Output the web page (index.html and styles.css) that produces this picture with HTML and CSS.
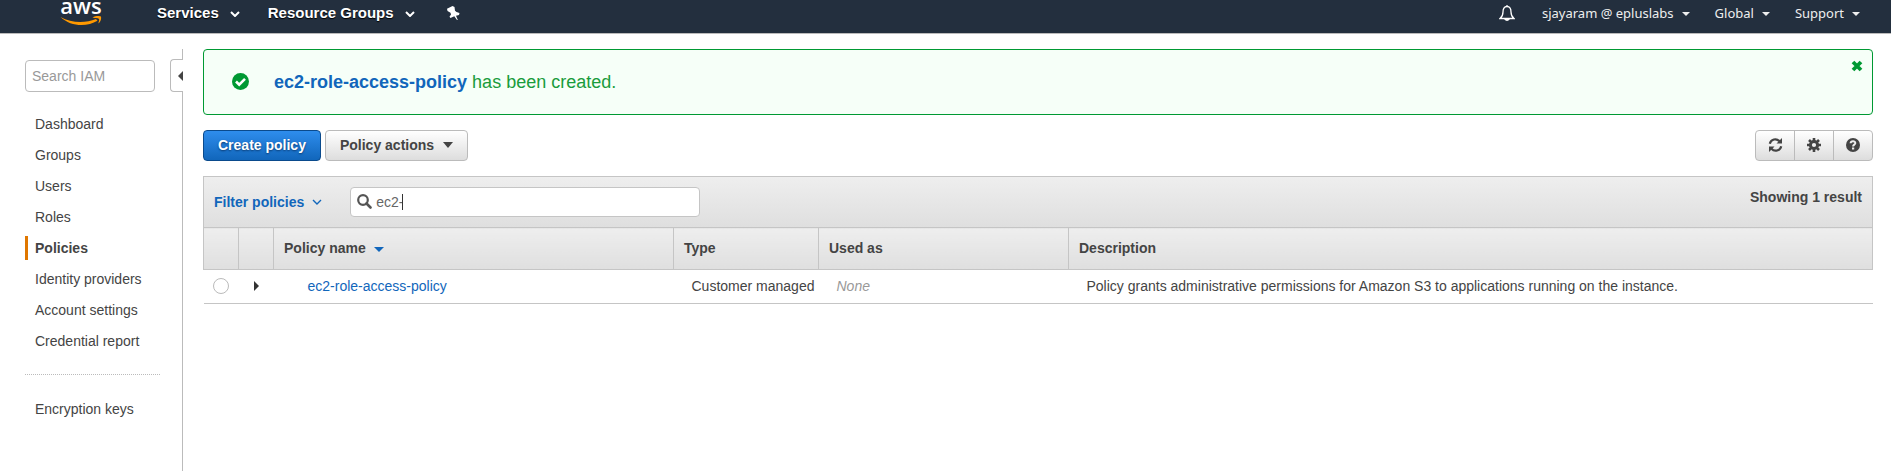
FILE: index.html
```html
<!DOCTYPE html>
<html lang="en">
<head>
<meta charset="utf-8">
<title>IAM Management Console</title>
<link rel="stylesheet" href="styles.css">
</head>
<body>
<header class="topbar">
  <nav class="topnav" aria-label="Services">
    <a class="logo" href="#" aria-label="AWS home">
      <span class="logo-word">aws</span>
      <svg class="logo-smile" width="42" height="10" viewBox="0 0 42 10" aria-hidden="true"><path d="M0.500 1C11 7 25 7.500 36 3L37.500 4.800C27 11 11 11 0.500 1Z" fill="#f90"/><path d="M32.500 1.500C36 -.4 40 -.1 41 .7C41.500 3 40.500 6 38.300 7.600C38.800 5.500 39.700 3.500 38.800 2.700C38 2 35 2.300 32.500 1.500Z" fill="#f90"/></svg>
    </a>
    <a class="toplink" href="#">Services <svg class="chev" width="10" height="6" viewBox="0 0 10 6"><path d="M1 1l4 4 4-4" fill="none" stroke="#fff" stroke-width="2"/></svg></a>
    <a class="toplink" href="#">Resource Groups <svg class="chev" width="10" height="6" viewBox="0 0 10 6"><path d="M1 1l4 4 4-4" fill="none" stroke="#fff" stroke-width="2"/></svg></a>
    <a class="pin" href="#" aria-label="Edit shortcuts"><svg width="13" height="14" viewBox="0 0 13 14"><path d="M5.500 0L7.500 1 8 4.800 9.500 6 12.500 7 12 9 9 9.700 10.800 14 10 14 7.300 10.300 3.500 12 2.500 10.800 4 8.500 3.500 6.800 0.500 5 0 2.800 2.500 1.500Z" fill="#fff"/></svg></a>
  </nav>
  <nav class="account" aria-label="Account">
    <a class="bell" href="#" aria-label="Notifications"><svg width="16" height="18" viewBox="0 0 16 18"><path d="M8 1v1.500M8 2.500C5 2.500 4 5 4 8c0 3.500-1 5-3 6.500h14c-2-1.500-3-3-3-6.500 0-3-1-5.500-4-5.500z" fill="none" stroke="#fff" stroke-width="1.300"/><path d="M5 15h6Q8 19 5 15z" fill="#fff"/></svg></a>
    <a href="#">sjayaram @ epluslabs <span class="caret"></span></a>
    <a href="#">Global <span class="caret"></span></a>
    <a href="#">Support <span class="caret"></span></a>
  </nav>
</header>
<div class="page">
  <aside class="sidebar">
    <input class="side-search" type="text" placeholder="Search IAM" aria-label="Search IAM">
    <button class="collapse" type="button" aria-label="Collapse navigation"><span></span></button>
    <nav class="side-nav" aria-label="IAM">
      <a href="#">Dashboard</a>
      <a href="#">Groups</a>
      <a href="#">Users</a>
      <a href="#">Roles</a>
      <a class="current" href="#" aria-current="page">Policies</a>
      <a href="#">Identity providers</a>
      <a href="#">Account settings</a>
      <a href="#">Credential report</a>
      <hr>
      <a href="#">Encryption keys</a>
    </nav>
  </aside>
  <main class="content">
    <div class="alert" role="status">
      <svg class="alert-icon" width="17" height="17" viewBox="0 0 17 17" aria-hidden="true"><circle cx="8.500" cy="8.500" r="8.500" fill="#093"/><path d="M4 8.500l3.200 3.200 5.800-5.800" fill="none" stroke="#fff" stroke-width="2.600"/></svg>
      <p><a href="#">ec2-role-access-policy</a> has been created.</p>
      <button class="close" type="button" aria-label="Dismiss"><svg width="12" height="12" viewBox="0 0 12 12"><path d="M2 2l8 8M10 2l-8 8" stroke="#093" stroke-width="3.800"/></svg></button>
    </div>
    <div class="toolbar">
      <button class="btn primary" type="button">Create policy</button>
      <button class="btn" type="button">Policy actions <span class="down"></span></button>
      <div class="group">
        <button class="btn" type="button" aria-label="Refresh"><svg width="15" height="14" viewBox="0 0 15 14"><path d="M1.800 5.800A5.600 5.600 0 0 1 11.500 3.300M13.200 8.200A5.600 5.600 0 0 1 3.500 10.700" fill="none" stroke="#444" stroke-width="2.200"/><path d="M14 0v5.500H8.500zM1 14V8.500h5.500z" fill="#444"/></svg></button>
        <button class="btn" type="button" aria-label="Settings"><svg width="14" height="14" viewBox="0 0 14 14"><circle cx="7" cy="7" r="3.600" fill="none" stroke="#444" stroke-width="3"/><path d="M7 0v3M7 11v3M0 7h3M11 7h3M2 2l2.200 2.200M9.800 9.800L12 12M12 2L9.800 4.200M4.200 9.800L2 12" stroke="#444" stroke-width="2.600"/></svg></button>
        <button class="btn" type="button" aria-label="Help"><svg width="14" height="14" viewBox="0 0 14 14"><circle cx="7" cy="7" r="7" fill="#444"/><path d="M4.600 5.300C4.800 2.400 9.400 2.600 9.300 5.200 9.200 6.700 7.100 6.600 7.100 8.500" fill="none" stroke="#eee" stroke-width="2"/><path d="M6 9.500h2.200v2H6z" fill="#eee"/></svg></button>
      </div>
    </div>
    <div class="filterbar">
      <button class="filter" type="button">Filter policies <svg width="10" height="6" viewBox="0 0 10 6"><path d="M1 1l4 4 4-4" fill="none" stroke="#1166bb" stroke-width="1.400"/></svg></button>
      <label class="search">
        <svg width="15" height="15" viewBox="0 0 15 15" aria-hidden="true"><circle cx="6" cy="6" r="4.800" fill="none" stroke="#555" stroke-width="2.200"/><path d="M9.500 9.500l4 4" stroke="#555" stroke-width="2.600" stroke-linecap="round"/></svg>
        <input type="text" value="ec2-" aria-label="Search policies"><span class="cursor"></span>
      </label>
      <span class="count">Showing 1 result</span>
    </div>
    <table class="policies">
      <colgroup><col class="c-pick"><col class="c-pick"><col class="c-name"><col class="c-type"><col class="c-used"><col></colgroup>
      <thead><tr><th></th><th></th><th>Policy name <span class="down sort"></span></th><th>Type</th><th>Used as</th><th>Description</th></tr></thead>
      <tbody><tr>
        <td class="pick"><input type="radio" name="policy" aria-label="Select ec2-role-access-policy"></td>
        <td class="pick"><button class="expand" type="button" aria-label="Expand"><span></span></button></td>
        <td class="name"><a href="#">ec2-role-access-policy</a></td>
        <td>Customer managed</td>
        <td class="none">None</td>
        <td>Policy grants administrative permissions for Amazon S3 to applications running on the instance.</td>
      </tr></tbody>
    </table>
  </main>
</div>
</body>
</html>
```
FILE: styles.css
```css
* { box-sizing: border-box; }
body {
  margin: 0;
  min-height: 100vh;
  display: flex;
  flex-direction: column;
  font: 14px/18px "Liberation Sans", Arial, sans-serif;
  color: #444;
  background: #fff;
}
a { color: #1166bb; text-decoration: none; }
button, input { font: inherit; color: inherit; margin: 0; }
button { cursor: pointer; padding: 0; }
svg { display: block; flex: none; }

.topbar {
  display: flex;
  justify-content: space-between;
  height: 34px;
  background: #232f3e;
  border-bottom: 1px solid #bbb;
}
.topbar a { color: #fff; display: flex; align-items: center; }
.topnav, .account { display: flex; height: 26px; }
.topnav { padding-left: 60px; }
.topnav .logo { flex-direction: column; justify-content: flex-end; width: 42px; margin-right: 55px; }
.logo-word { font: 600 22px/16px "Open Sans", "Noto Sans", sans-serif; margin-bottom: 3px; }
.toplink { font-size: 15px; font-weight: bold; gap: 11px; margin-right: 28px; text-shadow: 0 1px 1px #000; }
.toplink .chev { margin-top: 2px; }
.pin { margin-left: 4px; }
.account { font: 13px/18px "Noto Sans", "Open Sans", sans-serif; padding-right: 31px; gap: 25px; }
.account a { gap: 8px; color: #eee; }
.account .bell { margin-right: 2px; }
.caret { border: 4px solid transparent; border-top-color: #eee; border-bottom: 0; margin-top: 2px; }

.page { flex: 1; display: flex; padding: 15px 18px 0 0; }
.sidebar { position: relative; flex: none; width: 183px; padding: 11px 22px 0 25px; border-right: 1px solid #bbb; }
.side-search { width: 130px; height: 32px; padding: 0 6px; border: 1px solid #bbb; border-radius: 4px; }
.side-search::placeholder { color: #999; opacity: 1; }
.collapse {
  position: absolute;
  top: 10px;
  right: -1px;
  width: 13px;
  height: 33px;
  display: flex;
  align-items: center;
  justify-content: flex-end;
  border: 1px solid #bbb;
  border-right: 0;
  border-radius: 4px 0 0 4px;
  background: #fff;
}
.collapse span { border: 5px solid transparent; border-right-color: #444; border-left: 0; }
.side-nav { display: flex; flex-direction: column; gap: 7px; margin-top: 20px; }
.side-nav a { color: #444; line-height: 24px; padding-left: 7px; border-left: 3px solid transparent; white-space: nowrap; }
.side-nav .current { font-weight: bold; border-color: #e07700; }
.side-nav hr { width: 135px; margin: 14px 0 15px; border: 0; border-top: 1px dotted #bbb; }

.content { flex: 1; min-width: 0; padding-left: 20px; }
.alert { display: flex; align-items: center; height: 66px; padding: 0 9px 0 28px; border: 1px solid #093; border-radius: 4px; background: #f6fff8; color: #1a9c3c; font-size: 18px; }
.alert-icon { margin-bottom: 2px; }
.alert p { margin: 0; padding-left: 25px; }
.alert a { font-weight: bold; }
.alert .close { align-self: flex-start; margin: 10px 0 0 auto; border: 0; background: none; }

.toolbar { display: flex; gap: 4px; margin: 15px 0; }
.btn { display: flex; align-items: center; gap: 9px; height: 31px; padding: 0 14px 2px; border: 1px solid #bbb; border-radius: 4px; background: linear-gradient(#fff, #ddd); font-weight: bold; }
.primary { color: #fff; border-color: #0a4a8c; background: linear-gradient(#2e8ded, #1166bb); text-shadow: 0 1px 2px #0a3a70; }
.down { display: inline-block; border: 5px solid transparent; border-top: 6px solid #444; border-bottom: 0; }
.group { display: flex; margin-left: auto; }
.group .btn { justify-content: center; width: 40px; padding: 0 0 2px; border-radius: 0; }
.group .btn + .btn { margin-left: -1px; }
.group .btn:first-child { border-radius: 4px 0 0 4px; }
.group .btn:last-child { border-radius: 0 4px 4px 0; }

.filterbar { display: flex; align-items: center; height: 52px; padding: 0 10px; border: 1px solid #c5c5c5; background: linear-gradient(#eee, #dfdfdf); }
.filter { display: flex; align-items: center; gap: 8px; border: 0; background: none; color: #1166bb; font-weight: bold; }
.search { display: flex; align-items: center; width: 350px; height: 30px; margin-left: 28px; padding: 0 6px; border: 1px solid #c5c5c5; border-radius: 4px; background: #fff; }
.search svg { margin: 0 4px 2px 0; }
.search input { field-sizing: content; min-width: 0; border: 0; padding: 0; outline: 0; background: none; color: #666; }
.cursor { width: 1px; height: 16px; margin-left: -1px; background: #333; }
.count { align-self: flex-start; margin: 11px 0 0 auto; font-weight: bold; }

.policies { width: 100%; table-layout: fixed; border-collapse: collapse; border-bottom: 1px solid #c5c5c5; margin-top: -1px; }
.c-pick { width: 35px; }
.c-name { width: 400px; }
.c-type { width: 145px; }
.c-used { width: 250px; }
.policies th { height: 42px; padding: 0 10px 2px; border: 1px solid #c5c5c5; background: linear-gradient(#eee, #dfdfdf); text-align: left; }
.policies td { height: 34px; padding: 0 0 2px 18px; white-space: nowrap; }
.policies .sort { border-top-color: #1166bb; border-top-width: 5px; margin-left: 4px; vertical-align: 1px; }
.policies .pick { padding: 0 0 2px; text-align: center; }
.policies .name { padding-left: 34px; }
.policies .none { color: #999; font-style: italic; }
.pick input { appearance: none; display: block; width: 16px; height: 16px; margin: 0 auto; border: 1px solid #bbb; border-radius: 50%; background: #fff; }
.expand { border: 0; background: none; display: block; margin: 0 auto; }
.expand span { display: block; border: 5px solid transparent; border-left-color: #333; border-right: 0; }
```
